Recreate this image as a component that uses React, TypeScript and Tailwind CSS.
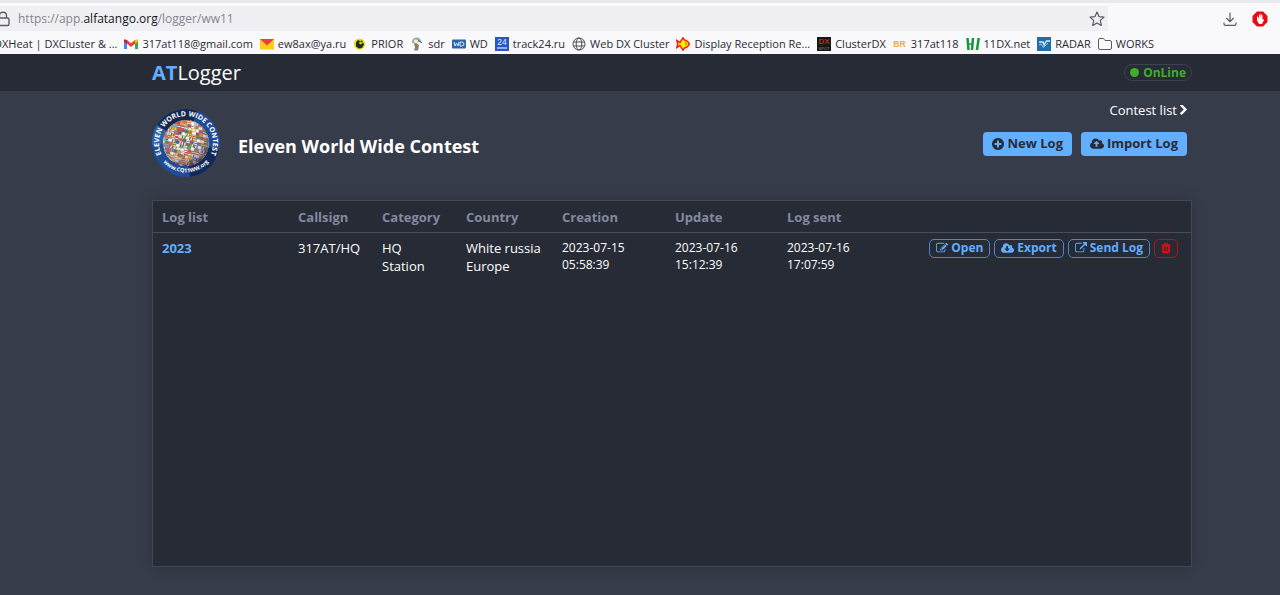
import type { ReactNode } from "react"

const paths = {
  plus: "M1344 960v-128q0-26-19-45t-45-19h-256v-256q0-26-19-45t-45-19h-128q-26 0-45 19t-19 45v256h-256q-26 0-45 19t-19 45v128q0 26 19 45t45 19h256v256q0 26 19 45t45 19h128q26 0 45-19t19-45v-256h256q26 0 45-19t19-45zm320-64q0 209-103 385.5t-279.5 279.5-385.5 103-385.5-103-279.5-279.5-103-385.5 103-385.5 279.5-279.5 385.5-103 385.5 103 279.5 279.5 103 385.5z",
  chevron: "M1363 877l-742 742q-19 19-45 19t-45-19l-166-166q-19-19-19-45t19-45l531-531-531-531q-19-19-19-45t19-45l166-166q19-19 45-19t45 19l742 742q19 19 19 45t-19 45z",
  edit: "M888 1184l116-116-152-152-116 116v56h96v96h56zm440-720q-16-16-33 1l-350 350q-17 17-1 33t33-1l350-350q17-17 1-33zm80 594v190q0 119-84.5 203.5t-203.5 84.5h-832q-119 0-203.5-84.5t-84.5-203.5v-832q0-119 84.5-203.5t203.5-84.5h832q63 0 117 25 15 7 18 23 3 17-9 29l-49 49q-14 14-32 8-23-6-45-6h-832q-66 0-113 47t-47 113v832q0 66 47 113t113 47h832q66 0 113-47t47-113v-126q0-13 9-22l64-64q15-15 35-7t20 29zm-96-738l288 288-672 672h-288v-288zm444 132l-92 92-288-288 92-92q28-28 68-28t68 28l152 152q28 28 28 68t-28 68z",
  external: "M1408 928v320q0 119-84.5 203.5t-203.5 84.5h-832q-119 0-203.5-84.5t-84.5-203.5v-832q0-119 84.5-203.5t203.5-84.5h704q14 0 23 9t9 23v64q0 14-9 23t-23 9h-704q-66 0-113 47t-47 113v832q0 66 47 113t113 47h832q66 0 113-47t47-113v-320q0-14 9-23t23-9h64q14 0 23 9t9 23zm384-864v512q0 26-19 45t-45 19-45-19l-176-176-652 652q-10 10-23 10t-23-10l-114-114q-10-10-10-23t10-23l652-652-176-176q-19-19-19-45t19-45 45-19h512q26 0 45 19t19 45z",
  trash: "M704 1376v-704q0-14-9-23t-23-9h-64q-14 0-23 9t-9 23v704q0 14 9 23t23 9h64q14 0 23-9t9-23zm256 0v-704q0-14-9-23t-23-9h-64q-14 0-23 9t-9 23v704q0 14 9 23t23 9h64q14 0 23-9t9-23zm256 0v-704q0-14-9-23t-23-9h-64q-14 0-23 9t-9 23v704q0 14 9 23t23 9h64q14 0 23-9t9-23zm-544-992h448l-48-117q-7-9-17-11h-317q-10 2-17 11zm928 32v64q0 14-9 23t-23 9h-96v948q0 83-47 143.5t-113 60.5h-832q-66 0-113-58.5t-47-141.5v-952h-96q-14 0-23-9t-9-23v-64q0-14 9-23t23-9h309l70-167q15-37 54-63t79-26h320q40 0 79 26t54 63l70 167h309q14 0 23 9t9 23z",
  upload: "M1216 864q0-14-9-23l-352-352q-9-9-23-9t-23 9l-351 351q-10 12-10 24 0 14 9 23t23 9h224v352q0 13 9.5 22.5t22.5 9.5h192q13 0 22.5-9.5t9.5-22.5v-352h224q13 0 22.5-9.5t9.5-22.5zm640 288q0 159-112.5 271.5t-271.5 112.5h-1088q-185 0-316.5-131.5t-131.5-316.5q0-130 70-240t188-165q-2-30-2-43 0-212 150-362t362-150q156 0 285.5 87t188.5 231q71-62 166-62 106 0 181 75t75 181q0 76-41 138 130 31 213.5 135.5t83.5 238.5z",
  download: "M1216 928q0-14-9-23t-23-9h-224v-352q0-13-9.5-22.5t-22.5-9.5h-192q-13 0-22.5 9.5t-9.5 22.5v352h-224q-13 0-22.5 9.5t-9.5 22.5q0 14 9 23l352 352q9 9 23 9t23-9l351-351q10-12 10-24zm640 224q0 159-112.5 271.5t-271.5 112.5h-1088q-185 0-316.5-131.5t-131.5-316.5q0-130 70-240t188-165q-2-30-2-43 0-212 150-362t362-150q156 0 285.5 87t188.5 231q71-62 166-62 106 0 181 75t75 181q0 76-41 138 130 31 213.5 135.5t83.5 238.5z",
}

const viewBoxes = {
  plus: "128 0 1536 1792",
  chevron: "346 190 1040 1450",
  edit: "0 0 1792 1792",
  external: "0 0 1792 1792",
  trash: "128 0 1536 1792",
  upload: "-64 0 1920 1792",
  download: "-64 0 1920 1792",
}

function Icon({ name, className = "size-3" }: { name: keyof typeof paths; className?: string }) {
  return (
    <svg viewBox={viewBoxes[name]} className={className} fill="currentColor" aria-hidden="true">
      <path d={paths[name]} />
    </svg>
  )
}

function Fav({ children }: { children: ReactNode }) {
  return (
    <svg viewBox="0 0 14 14" className="size-[14px] shrink-0 font-['Liberation_Sans',sans-serif]" aria-hidden="true">
      {children}
    </svg>
  )
}

const bookmarks: { label: string; icon: ReactNode }[] = [
  {
    label: "317at118@gmail.com",
    icon: (
      <Fav>
        <path d="M0 3.5V12h3V6z" fill="#4285f4" />
        <path d="M11 6v6h3V3.5z" fill="#34a853" />
        <path d="M0 2.2 3 3v3.8L0 4.6z" fill="#c5221f" />
        <path d="M3 3l4 3.2L11 3v3.8L7 10 3 6.8z" fill="#ea4335" />
        <path d="M11 3l3-.8v2.4l-3 2.2z" fill="#fbbc04" />
      </Fav>
    ),
  },
  {
    label: "ew8ax@ya.ru",
    icon: (
      <Fav>
        <path d="M0 2h14v10.500H0z" fill="#ffcc17" />
        <path d="M0 2h14L7 8.500z" fill="#f8383c" />
      </Fav>
    ),
  },
  {
    label: "PRIOR",
    icon: (
      <Fav>
        <circle cx="6.500" cy="7" r="5.600" fill="#e3dc12" />
        <path d="M3 5.500l2-2.500 2 1-1 2.500 2 1 2-2 1 2-2 3.500-3 .5-3-2z" fill="#1f2c1c" />
        <circle cx="8.500" cy="4.500" r="1" fill="#1f2c1c" />
      </Fav>
    ),
  },
  {
    label: "sdr",
    icon: (
      <Fav>
        <path d="M2 4q1-4 5-3.500 3 0 4 3.500l1 2-4-1-2 2-4-1z" fill="#9dabb0" />
        <path d="M4 2.500l4 .5-1 4-3-2z" fill="#f4f0bf" />
        <path d="M6 6l3 2-1 5.500H4L5 10 4 7z" fill="#8b8165" />
        <path d="M8 3l4 3" stroke="#3a71a9" />
      </Fav>
    ),
  },
  {
    label: "WD",
    icon: (
      <Fav>
        <rect y="2.500" width="14" height="9" rx="1" fill="#2d66a6" />
        <path d="M2 5l1 4 1.500-3L6 9l1-4M8 5v4h1.500q2.500 0 2.500-2T9.500 5z" fill="none" stroke="#d9eaff" />
      </Fav>
    ),
  },
  {
    label: "track24.ru",
    icon: (
      <Fav>
        <path d="M0 0h14v14H0z" fill="#2857c5" />
        <text x="7" y="8" textAnchor="middle" fontSize="8.500" fill="#e8efff">24</text>
        <path d="M2 11h10" stroke="#b8caff" strokeWidth="1.500" />
      </Fav>
    ),
  },
  {
    label: "Web DX Cluster",
    icon: (
      <Fav>
        <g fill="none" stroke="#4b4c52">
          <circle cx="7" cy="7" r="6" />
          <ellipse cx="7" cy="7" rx="2.800" ry="6" />
          <path d="M1.500 5h11M1.500 9h11" />
        </g>
      </Fav>
    ),
  },
  {
    label: "Display Reception Re...",
    icon: (
      <Fav>
        <path d="M.8 3.500L4 5.500l3-4.700 1.500 2.200q3.500.5 4.800 4-1.300 3.500-4.800 4L7 13.200 4 8.500l-3.200 2 1-3.500z" fill="#ffef00" stroke="#f5251c" strokeWidth="1.500" />
        <path d="M9 5l1.500 1.500L9.500 8" fill="none" stroke="#f5251c" />
      </Fav>
    ),
  },
  {
    label: "ClusterDX",
    icon: (
      <Fav>
        <path d="M0 0h14v14H0z" fill="#181515" />
        <text x="7" y="7.300" textAnchor="middle" fontSize="8" fontWeight="700" fill="#b92a20">DX</text>
        <text x="7" y="13" textAnchor="middle" fontSize="4" fill="#888">SPOT</text>
      </Fav>
    ),
  },
  {
    label: "317at118",
    icon: (
      <Fav>
        <text x="6.500" y="10" textAnchor="middle" fontSize="8.500" fontWeight="700" fill="#efa64b">BR</text>
      </Fav>
    ),
  },
  {
    label: "11DX.net",
    icon: (
      <Fav>
        <g stroke="#16973b" strokeWidth="2.500" fill="none">
          <path d="M1.500 1l1 12M7 1L6 13M12.700 1L11 13" />
          <path d="M2 7h4" strokeWidth="1.500" />
        </g>
      </Fav>
    ),
  },
  {
    label: "RADAR",
    icon: (
      <Fav>
        <path d="M0 0h14v14H0z" fill="#1f6dab" />
        <path d="M2 5h4l1 3 2.500-4H13" fill="none" stroke="#dcecf7" strokeWidth="1.300" />
        <path d="M2 8l2-1 2.500 3.500L11 6" fill="none" stroke="#a9cde6" />
      </Fav>
    ),
  },
  {
    label: "WORKS",
    icon: (
      <Fav>
        <path d="M2 1.500h3.500l1.500 2h5q1.500 0 1.500 1.500v6q0 1.500-1.500 1.500H2Q.5 12.500.5 11V3Q.5 1.500 2 1.500z" fill="none" stroke="#5b5b66" />
      </Fav>
    ),
  },
]

function Browser() {
  return (
    <div className="overflow-hidden border-t-3 border-[#e9e9ed] bg-[#f9f9fb] text-[#2b2a33]">
      <div className="mt-[3px] flex h-[25px] items-center">
        <div className="flex h-full w-[1108px] items-center bg-[#f0f0f4]">
          <svg viewBox="0 0 14 16" className="-ml-1 h-4 w-[14px] shrink-0" fill="none" stroke="#5b5b66" strokeWidth="1.400" aria-hidden="true">
            <rect x="1" y="7" width="12" height="7.500" rx="1.500" />
            <path d="M3.500 7V4.500q0-3.300 3.500-3.300t3.500 3.300V7" />
          </svg>
          <div className="ml-2 grow text-xs text-[#85858d]">
            https://app.<span className="text-[#15141a]">alfatango.org</span>/logger/ww11
          </div>
          <button aria-label="Bookmark this page" className="mr-[3px]">
            <svg viewBox="0 0 16 16" className="size-4" fill="none" stroke="#5b5b66" strokeWidth="1.200" strokeLinejoin="round">
              <path d="M8 1l2 4.600 5 .5-3.700 3.300 1 5L8 11.900l-4.300 2.500 1-5L1 6.100l5-.5z" />
            </svg>
          </button>
        </div>
        <div className="ml-auto flex items-center gap-[15px] pr-3">
          <button aria-label="Downloads">
            <svg viewBox="0 0 14 14" className="size-[14px]" fill="none" stroke="#5b5b66" strokeWidth="1.200">
              <path d="M7 .5v9M3.300 6L7 9.700 10.700 6M1 10.500v1.500q0 1.300 1.300 1.300h9.400q1.300 0 1.300-1.300v-1.500" />
            </svg>
          </button>
          <button aria-label="Ad blocker">
            <svg viewBox="0 0 16 16" className="size-4">
              <path d="M5 .5h6l4.500 4.500v6L11 15.500H5L.5 11V5z" fill="#eb0a10" />
              <path d="M5 5.500v4l2 3.500h3l2-4-.5-1-1 1V4.500l-1-.5v3V3L8.500 3v4L8 3.500 7 3.700V8l-1-2.500z" fill="#fff" />
            </svg>
          </button>
        </div>
      </div>
      <nav className="flex h-[23px] items-center gap-[7px] pt-[3px] text-[11px] leading-4 whitespace-nowrap">
        <a href="#dxheat" className="-ml-[6px]">DXHeat | DXCluster &amp; ...</a>
        {bookmarks.map((b) => (
          <a key={b.label} href="#bookmark" className="flex items-center gap-1">
            {b.icon}
            {b.label}
          </a>
        ))}
      </nav>
    </div>
  )
}

const flagColors = ["#d03434", "#f3f0ea", "#2f7d3c", "#f0c93e", "#2b4da8", "#ffffff", "#c8252f", "#5fa4d0", "#f0efe9", "#d9772d"]

function ContestLogo() {
  // small flags laid in bricks over the ball
  const cells = Array.from({ length: 224 }, (_, i) => {
    const row = Math.floor(i / 14)
    const seed = (i * i * 31 + i * 577 + row * 389) % 997
    return {
      x: (i % 14) * 3.8 + (row % 3) * 1.3 - 3,
      y: row * 3.1,
      a: flagColors[seed % 10],
      b: flagColors[Math.floor(seed / 10) % 10],
      vertical: seed % 3 === 0,
    }
  })
  return (
    <svg viewBox="0 0 68 68" className="size-[68px] shrink-0" role="img" aria-label="Eleven World Wide Contest">
      <defs>
        <clipPath id="globe"><circle cx="34" cy="34" r="23" /></clipPath>
        <radialGradient id="shade" cx=".42" cy=".38" r=".62">
          <stop offset=".5" stopColor="#fff" stopOpacity=".1" />
          <stop offset="1" stopColor="#3a2038" stopOpacity=".6" />
        </radialGradient>
        <path id="topArc" d="M12.200 50A27 27 0 1 1 55.800 50" />
        <path id="bottomArc" d="M9 50A30 30 0 0 0 59 50" />
      </defs>
      <circle cx="34" cy="34" r="34" fill="#1f4c96" />
      <path d="M34 34L5 16A34 34 0 0 1 45 2z" fill="#14294f" />
      <path d="M34 34L67 40A34 34 0 0 1 38 68z" fill="#102a59" />
      <path d="M34 34L0 36A34 34 0 0 1 5 16z" fill="#2963ae" />
      <g clipPath="url(#globe)">
        <path d="M10 10h48v48H10z" fill="#94806f" />
        <g transform="translate(9 9) rotate(14 25 25)">
          {cells.map((c, i) => (
            <g key={i}>
              <rect x={c.x} y={c.y} width="3.400" height="2.700" fill={c.a} />
              {c.vertical ? (
                <rect x={c.x + 1.1} y={c.y} width="1.200" height="2.700" fill={c.b} />
              ) : (
                <rect x={c.x} y={c.y + 0.9} width="3.400" height=".9" fill={c.b} />
              )}
            </g>
          ))}
        </g>
        <circle cx="34" cy="34" r="23" fill="url(#shade)" />
      </g>
      <g fill="#fff" fontWeight="700">
        <text fontSize="7" textAnchor="middle">
          <textPath href="#topArc" startOffset="50%">ELEVEN WORLD WIDE CONTEST</textPath>
        </text>
        <text fontSize="5.500" textAnchor="middle">
          <textPath href="#bottomArc" startOffset="50%">www.CQ11WW.org</textPath>
        </text>
      </g>
    </svg>
  )
}

const mainButton = "flex h-6 items-center gap-[3px] rounded bg-[#62aeff] px-[9px]"
const rowButton = "flex h-[19px] items-center gap-[3px] rounded-[5px] border border-[#4a86cc] px-[6px] text-[#62aeff]"

export default function App() {
  return (
    <div className="flex min-h-screen flex-col bg-[#373c4a] font-['Open_Sans','Noto_Sans',sans-serif] text-[13px] text-white">
      <Browser />
      <header className="flex h-[37px] items-center justify-between bg-[#272b35] pr-[88px] pl-[152px]">
        <a href="#home" className="text-xl"><b className="text-[#62aeff]">AT</b>Logger</a>
        <div className="flex h-[17px] items-center gap-1 rounded-full border border-[#3d424f] px-[5px] text-xs font-bold text-[#3fae2a]">
          <span className="size-[9px] rounded-full bg-[#3fae2a]" />
          OnLine
        </div>
      </header>
      <main className="flex grow flex-col pr-[88px] pb-7 pl-[152px]">
        <section className="flex h-[109px] justify-between pt-[9px] pr-[5px]">
          <div className="flex items-start gap-[18px] pt-[9px]">
            <ContestLogo />
            <h1 className="pt-[25px] text-lg leading-6 font-bold">Eleven World Wide Contest</h1>
          </div>
          <div className="flex flex-col items-end gap-3">
            <a href="#contests" className="flex items-center gap-[3px] leading-5">
              Contest list <Icon name="chevron" className="h-[10px] w-[7px]" />
            </a>
            <div className="flex gap-[9px] font-bold text-[#272b35]">
              <button className={mainButton}><Icon name="plus" className="h-[14px] w-3" /> New Log</button>
              <button className={mainButton}><Icon name="upload" className="size-[14px]" /> Import Log</button>
            </div>
          </div>
        </section>
        <section className="grow border border-[#424754] bg-[#272b35] shadow-[0_0_10px_rgba(35,28,50,0.4)]">
          <table className="w-full table-fixed text-left">
            <thead>
              <tr className="h-[31px] border-b border-[#484d59] text-[#8489a0] [&>th]:px-[9px] [&>th]:pt-[2px]">
                <th className="w-[136px]">Log list</th>
                <th className="w-[84px]">Callsign</th>
                <th className="w-[84px]">Category</th>
                <th className="w-[96px]">Country</th>
                <th className="w-[113px]">Creation</th>
                <th className="w-[112px]">Update</th>
                <th className="w-[112px]">Log sent</th>
                <th aria-label="Actions" />
              </tr>
            </thead>
            <tbody>
              <tr className="align-top leading-[18px] [&>td]:px-[9px] [&>td]:pt-[6px]">
                <td><a href="#2023" className="font-bold text-[#62aeff]">2023</a></td>
                <td>317AT/HQ</td>
                <td>HQ<br />Station</td>
                <td className="whitespace-nowrap">White russia<br />Europe</td>
                <td className="text-xs leading-[17px]">2023-07-15<br />05:58:39</td>
                <td className="text-xs leading-[17px]">2023-07-16<br />15:12:39</td>
                <td className="text-xs leading-[17px]">2023-07-16<br />17:07:59</td>
                <td>
                  <div className="flex justify-end gap-1 pr-1 text-xs font-bold">
                    <button className={rowButton}><Icon name="edit" /> Open</button>
                    <button className={rowButton}><Icon name="download" className="size-[13px]" /> Export</button>
                    <button className={rowButton}><Icon name="external" /> Send Log</button>
                    <button aria-label="Delete log" className="flex h-[19px] w-6 items-center justify-center rounded-[5px] border border-[#c20d1b] text-[#f40612]"><Icon name="trash" /></button>
                  </div>
                </td>
              </tr>
            </tbody>
          </table>
        </section>
      </main>
    </div>
  )
}
